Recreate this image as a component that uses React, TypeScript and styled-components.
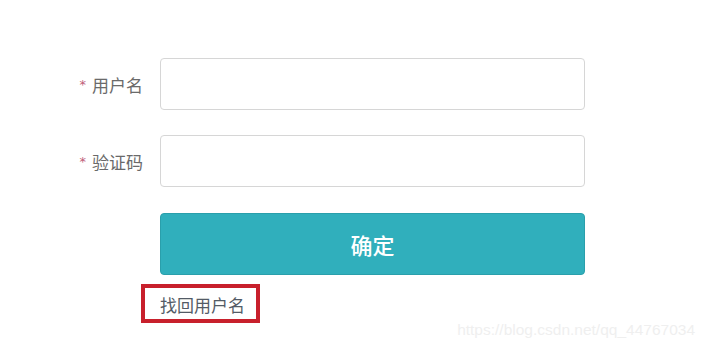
import React from "react";
import styled, { createGlobalStyle } from "styled-components";

const Global = createGlobalStyle`
  html, body { margin: 0; padding: 0; background: #ffffff; }
  body { font-family: "Noto Sans CJK SC", "Microsoft YaHei", sans-serif; }
  * { box-sizing: border-box; }
`;

const Page = styled.div`
  position: relative;
  width: 703px;
  height: 348px;
  overflow: hidden;
  padding-top: 58px;
  background: #fff;
`;

const Form = styled.div`
  display: flex;
  flex-direction: column;
`;

const Row = styled.div<{ $gap?: number }>`
  display: flex;
  align-items: center;
  margin-bottom: ${(p) => p.$gap ?? 0}px;
`;

const Label = styled.label`
  width: 143px;
  margin-right: 17px;
  display: flex;
  justify-content: flex-end;
  align-items: center;
  font-size: 17px;
  color: #6a6a6a;
  line-height: 1;
`;

const Star = styled.span`
  color: #c0607a;
  font-size: 13px;
  margin-right: 6px;
  font-family: "DejaVu Sans", sans-serif;
`;

const Input = styled.input`
  width: 425px;
  height: 52px;
  border: 1px solid #d6d6d6;
  border-radius: 4px;
  outline: none;
  padding: 0 12px;
  font-size: 16px;
  background: #fff;
`;

const Button = styled.button`
  margin-left: 160px;
  width: 425px;
  height: 62px;
  border: 1px solid #2a9fab;
  border-radius: 4px;
  background: #30afbc;
  color: #ffffff;
  font-family: "Noto Sans CJK SC", sans-serif;
  font-size: 22px;
  font-weight: 500;
  cursor: pointer;
`;

const Highlight = styled.div`
  margin-top: 9px;
  margin-left: 141px;
  width: 119px;
  height: 39px;
  border: 4px solid #c8202c;
  display: flex;
  align-items: center;
  padding-left: 15px;
`;

const Link = styled.a`
  font-size: 17px;
  color: #535b66;
  text-decoration: none;
  line-height: 1;
  margin-top: 1px;
`;

const Watermark = styled.div`
  position: absolute;
  right: 8px;
  bottom: 9px;
  font-family: "Liberation Sans", Arial, sans-serif;
  font-size: 15.5px;
  color: #efefef;
`;

export default function App() {
  return (
    <>
      <Global />
      <Page>
        <Form>
          <Row $gap={25}>
            <Label>
              <Star>*</Star>用户名
            </Label>
            <Input />
          </Row>
          <Row $gap={26}>
            <Label>
              <Star>*</Star>验证码
            </Label>
            <Input />
          </Row>
          <Button>确定</Button>
          <Highlight>
            <Link href="#">找回用户名</Link>
          </Highlight>
        </Form>
        <Watermark>https://blog.csdn.net/qq_44767034</Watermark>
      </Page>
    </>
  );
}
